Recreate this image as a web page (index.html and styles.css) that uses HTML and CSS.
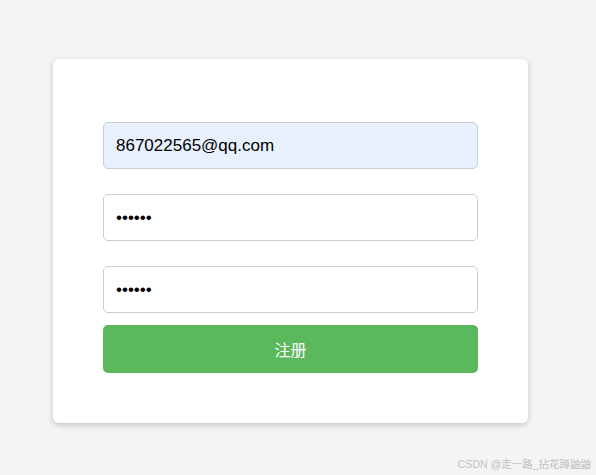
FILE: index.html
```html
<!DOCTYPE html>
<html lang="zh-CN">
<head>
    <meta charset="UTF-8">
    <meta name="viewport" content="width=device-width, initial-scale=1.0">
    <title>注册</title>
    <link rel="stylesheet" href="styles.css">
</head>
<body>
    <div class="card">
        <form class="register-form">
            <input class="field autofill" type="text" value="867022565@qq.com">
            <input class="field" type="password" value="123456">
            <input class="field last" type="password" value="123456">
            <button type="button" class="button">注册</button>
        </form>
    </div>

    <div class="watermark">CSDN @走一路_拈花蹲鼬鼬</div>
</body>
</html>
```

FILE: styles.css
```css
body {
    margin: 0;
    height: 100vh;
    background: #f4f4f4;
    font-family: Arial, "Liberation Sans", "Noto Sans CJK SC", sans-serif;
    overflow: hidden;
}

.card {
    width: 375px;
    margin: 59px 0 0 53px;
    padding: 63px 50px 50px;
    background: #fff;
    border-radius: 6px;
    box-shadow: 0 2px 6px rgba(0, 0, 0, 0.2);
}

.register-form {
    display: flex;
    flex-direction: column;
}

.field {
    height: 47px;
    margin-bottom: 25px;
    padding: 0 12px;
    border: 1px solid #ccc;
    border-radius: 5px;
    background: #fff;
    font-family: Arial, "Liberation Sans", sans-serif;
    font-size: 17px;
    color: #000;
    box-sizing: border-box;
    outline: none;
}

.field.autofill {
    background: #e8f0fe;
}

.field.last {
    margin-bottom: 12px;
}

.button {
    height: 48px;
    border: none;
    border-radius: 5px;
    background: #5cb85c;
    color: #fff;
    font-family: "Noto Sans CJK SC", sans-serif;
    font-size: 16px;
    cursor: pointer;
}

.watermark {
    position: absolute;
    right: 5px;
    bottom: 4px;
    font-family: Arial, "Liberation Sans", "Noto Sans CJK SC", sans-serif;
    font-size: 10.5px;
    color: #c0c0c0;
}
```
